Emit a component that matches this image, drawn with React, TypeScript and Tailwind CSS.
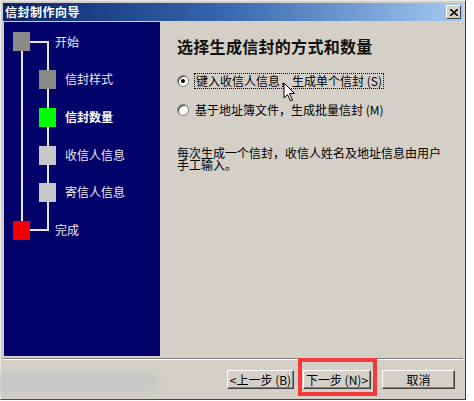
import React from "react";

const font = { fontFamily: '"Noto Sans CJK SC", "Liberation Sans", sans-serif' };

interface Step {
  label: string;
  y: number;
  color: string;
  bold?: boolean;
}

// small boxes on the inner branch
const steps: Step[] = [
  { label: "信封样式", y: 48, color: "#8a8a86" },
  { label: "信封数量", y: 86, color: "#00ff00", bold: true },
  { label: "收信人信息", y: 124, color: "#c8c8c8" },
  { label: "寄信人信息", y: 161, color: "#c8c8c8" },
];

function StepTree() {
  return (
    <div className="relative w-full h-full text-[12px] text-[#e8e8f0]">
      <svg className="absolute left-0 top-0" width="156" height="240">
        {/* outer line: start -> finish */}
        <line x1="18" y1="29" x2="18" y2="200" stroke="#e6e6e6" strokeWidth="2" />
        {/* inner branch */}
        <polyline points="26,20 44,20 44,208 26,208" fill="none" stroke="#e6e6e6" strokeWidth="2" />
        <rect x="9" y="10" width="17" height="19" fill="#8a8a86" />
        <rect x="9" y="199" width="17" height="19" fill="#ee0000" />
        {steps.map((s) => (
          <rect key={s.label} x="35" y={s.y} width="17" height="19" fill={s.color} />
        ))}
      </svg>
      <span className="absolute left-[51px] top-[11px] leading-[18px]">开始</span>
      {steps.map((s) => (
        <span
          key={s.label}
          className={`absolute left-[61px] leading-[18px] ${s.bold ? "font-bold text-white" : ""}`}
          style={{ top: s.y }}
        >
          {s.label}
        </span>
      ))}
      <span className="absolute left-[51px] top-[199px] leading-[18px]">完成</span>
    </div>
  );
}

function Radio({ checked }: { checked?: boolean }) {
  return (
    <span className="relative inline-block w-[12px] h-[12px] rounded-full bg-white border border-[#808080] shadow-[inset_1px_1px_0_#404040]">
      {checked && <span className="absolute left-[3px] top-[3px] w-[4px] h-[4px] rounded-full bg-black" />}
    </span>
  );
}

function Btn({ children, w, className = "" }: { children: React.ReactNode; w: string; className?: string }) {
  return (
    <button
      className={`${w} h-[19px] bg-[#d4d0c8] text-[12px] text-black leading-none border border-t-white border-l-white border-r-[#404040] border-b-[#404040] shadow-[inset_-1px_-1px_0_#808080] flex items-center justify-center ${className}`}
    >
      {children}
    </button>
  );
}

export default function App() {
  return (
    <div className="w-[474px] h-[401px] bg-white relative overflow-hidden" style={font}>
      <div className="w-[466px] h-[400px] bg-[#d4d0c8] border border-t-[#e8e8e8] border-l-[#e8e8e8] border-r-[#404040] border-b-[#404040] px-[2px] pt-[2px] flex flex-col">
        {/* title bar */}
        <div className="h-[18px] flex items-center justify-between pl-[2px] pr-[2px] bg-gradient-to-r from-[#0a246a] via-[#3a6ab0] to-[#a6caf0]">
          <span className="text-white text-[12px] font-bold tracking-[0.5px]">信封制作向导</span>
          <span className="w-[15px] h-[14px] bg-[#d4d0c8] border border-t-white border-l-white border-r-[#404040] border-b-[#404040] flex items-center justify-center">
            <svg width="8" height="7" viewBox="0 0 8 7">
              <path d="M0 0 L8 7 M8 0 L0 7" stroke="black" strokeWidth="1.6" />
            </svg>
          </span>
        </div>

        {/* content */}
        <div className="flex h-[334px] mt-[1px] ml-[1px]">
          <div className="w-[156px] bg-[#02026a]">
            <StepTree />
          </div>
          <div className="flex-1 bg-[#d4d0c8] pl-[17px] pt-[14px] text-[12px] text-black relative">
            <h1 className="text-[16px] font-bold leading-[20px] tracking-[0.3px] text-[#101010]">选择生成信封的方式和数量</h1>
            <div className="mt-[17px] flex items-center gap-[5px] h-[16px]">
              <Radio checked />
              <span className="border border-dotted border-black px-[1px] leading-[14px]">键入收信人信息，生成单个信封 (S)</span>
            </div>
            <div className="mt-[13px] flex items-center gap-[6px] h-[16px]">
              <Radio />
              <span className="leading-[14px]">基于地址簿文件，生成批量信封 (M)</span>
            </div>
            <p className="mt-[29px] leading-[12px] w-[270px] text-[12px]">
              每次生成一个信封，收信人姓名及地址信息由用户手工输入。
            </p>
            {/* mouse pointer */}
            <svg className="absolute left-[123px] top-[60px]" width="14" height="20" viewBox="0 0 14 20">
              <path d="M1 1 L1 16 L4.5 12.5 L7.5 19 L9.5 18 L6.5 11.5 L11.5 11.5 Z" fill="white" stroke="black" strokeWidth="1" />
            </svg>
          </div>
        </div>

        {/* separator */}
        <div className="h-[2px] mt-[2px] border-t border-t-[#808080] border-b border-b-white" />

        {/* buttons */}
        <div className="flex items-center pl-[224px] mt-[10px]">
          <Btn w="w-[67px]">&lt;上一步 (B)</Btn>
          <Btn w="w-[68px]" className="ml-[9px]">下一步 (N)&gt;</Btn>
          <Btn w="w-[73px]" className="ml-[11px]">取消</Btn>
        </div>
      </div>

      {/* red highlight */}
      <div className="absolute left-[298px] top-[358px] w-[79px] h-[38px] border-[4px] border-[#f23a3a]" />
      {/* smudged watermark area */}
      <div className="absolute left-[-10px] top-[372px] w-[170px] h-[22px] bg-[#c4c4c4] rounded-full blur-[5px] opacity-70" />
    </div>
  );
}
